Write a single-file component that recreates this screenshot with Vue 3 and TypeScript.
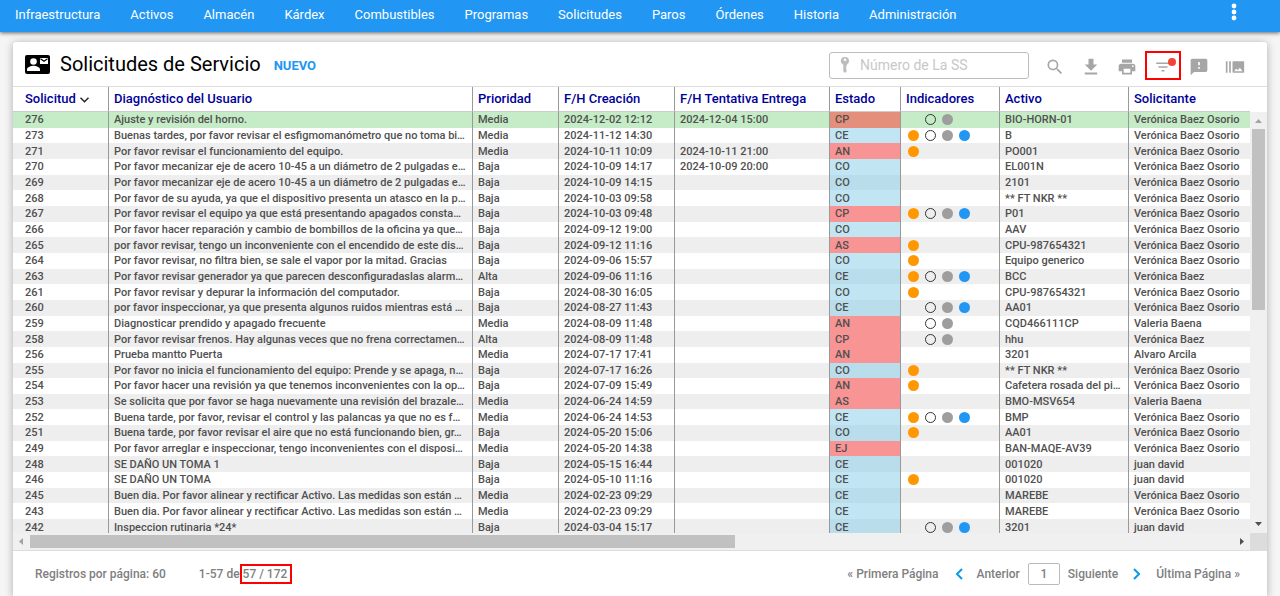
<script setup lang="ts">
import { ref } from 'vue'

type Row = { id: number; diag: string; prio: string; created: string; due: string; state: string; dots: string; asset: string; by: string }

const menu: string[] = ['Infraestructura', 'Activos', 'Almacén', 'Kárdex', 'Combustibles', 'Programas', 'Solicitudes', 'Paros', 'Órdenes', 'Historia', 'Administración']
const columns: string[] = ['Solicitud', 'Diagnóstico del Usuario', 'Prioridad', 'F/H Creación', 'F/H Tentativa Entrega', 'Estado', 'Indicadores', 'Activo', 'Solicitante']
const vbo = 'Verónica Baez Osorio'
const dotKinds: string[] = ['o', 'w', 'g', 'b']

const source: [number, string, string, string, string, string, string, string, string][] = [
  [276, 'Ajuste y revisión del horno.', 'Media', '2024-12-02 12:12', '2024-12-04 15:00', 'CP', 'wg', 'BIO-HORN-01', vbo],
  [273, 'Buenas tardes, por favor revisar el esfigmomanómetro que no toma bi…', 'Media', '2024-11-12 14:30', '', 'CE', 'owgb', 'B', vbo],
  [271, 'Por favor revisar el funcionamiento del equipo.', 'Media', '2024-10-11 10:09', '2024-10-11 21:00', 'AN', 'o', 'PO001', vbo],
  [270, 'Por favor mecanizar eje de acero 10-45 a un diámetro de 2 pulgadas e…', 'Baja', '2024-10-09 14:17', '2024-10-09 20:00', 'CO', '', 'EL001N', vbo],
  [269, 'Por favor mecanizar eje de acero 10-45 a un diámetro de 2 pulgadas e…', 'Baja', '2024-10-09 14:15', '', 'CO', '', '2101', vbo],
  [268, 'Por favor de su ayuda, ya que el dispositivo presenta un atasco en la p…', 'Baja', '2024-10-03 09:58', '', 'CO', '', '** FT NKR **', vbo],
  [267, 'Por favor revisar el equipo ya que está presentando apagados consta…', 'Baja', '2024-10-03 09:48', '', 'CP', 'owgb', 'P01', vbo],
  [266, 'Por favor hacer reparación y cambio de bombillos de la oficina ya que…', 'Baja', '2024-09-12 19:00', '', 'CO', '', 'AAV', vbo],
  [265, 'por favor revisar, tengo un inconveniente con el encendido de este dis…', 'Baja', '2024-09-12 11:16', '', 'AS', 'o', 'CPU-987654321', vbo],
  [264, 'Por favor revisar, no filtra bien, se sale el vapor por la mitad. Gracias', 'Baja', '2024-09-06 15:57', '', 'CO', 'o', 'Equipo generico', vbo],
  [263, 'Por favor revisar generador ya que parecen desconfiguradaslas alarm…', 'Alta', '2024-09-06 11:16', '', 'CE', 'owgb', 'BCC', 'Verónica Baez'],
  [261, 'Por favor revisar y depurar la información del computador.', 'Baja', '2024-08-30 16:05', '', 'CO', 'o', 'CPU-987654321', vbo],
  [260, 'por favor inspeccionar, ya que presenta algunos ruidos mientras está …', 'Baja', '2024-08-27 11:43', '', 'CE', 'wgb', 'AA01', vbo],
  [259, 'Diagnosticar prendido y apagado frecuente', 'Media', '2024-08-09 11:48', '', 'AN', 'wg', 'CQD466111CP', 'Valeria Baena'],
  [258, 'Por favor revisar frenos. Hay algunas veces que no frena correctamen…', 'Alta', '2024-08-09 11:48', '', 'CP', 'wg', 'hhu', 'Verónica Baez'],
  [256, 'Prueba mantto Puerta', 'Media', '2024-07-17 17:41', '', 'AN', '', '3201', 'Alvaro Arcila'],
  [255, 'Por favor no inicia el funcionamiento del equipo: Prende y se apaga, n…', 'Baja', '2024-07-17 16:26', '', 'CO', 'o', '** FT NKR **', vbo],
  [254, 'Por favor hacer una revisión ya que tenemos inconvenientes con la op…', 'Baja', '2024-07-09 15:49', '', 'AN', 'o', 'Cafetera rosada del pi…', vbo],
  [253, 'Se solicita que por favor se haga nuevamente una revisión del brazale…', 'Media', '2024-06-24 14:59', '', 'AS', '', 'BMO-MSV654', 'Valeria Baena'],
  [252, 'Buena tarde, por favor, revisar el control y las palancas ya que no es f…', 'Media', '2024-06-24 14:53', '', 'CE', 'owgb', 'BMP', vbo],
  [251, 'Buena tarde, por favor revisar el aire que no está funcionando bien, gr…', 'Baja', '2024-05-20 15:06', '', 'CO', 'o', 'AA01', vbo],
  [249, 'Por favor arreglar e inspeccionar, tengo inconvenientes con el disposi…', 'Media', '2024-05-20 14:38', '', 'EJ', '', 'BAN-MAQE-AV39', vbo],
  [248, 'SE DAÑO UN TOMA 1', 'Baja', '2024-05-15 16:44', '', 'CE', '', '001020', 'juan david'],
  [246, 'SE DAÑO UN TOMA', 'Baja', '2024-05-10 11:16', '', 'CE', 'o', '001020', 'juan david'],
  [245, 'Buen dia. Por favor alinear y rectificar Activo. Las medidas son están …', 'Media', '2024-02-23 09:29', '', 'CE', '', 'MAREBE', vbo],
  [243, 'Buen dia. Por favor alinear y rectificar Activo. Las medidas son están …', 'Media', '2024-02-23 09:29', '', 'CE', '', 'MAREBE', vbo],
  [242, 'Inspeccion rutinaria *24*', 'Baja', '2024-03-04 15:17', '', 'CE', 'wgb', '3201', 'juan david'],
]
const rows: Row[] = source.map(([id, diag, prio, created, due, state, dots, asset, by]) => ({ id, diag, prio, created, due, state, dots, asset, by }))

const selected = ref(276)
const query = ref('')
const page = ref('1')
const isBlue = (s: string): boolean => s === 'CE' || s === 'CO'
</script>

<template>
  <div class="app">
    <header class="topbar">
      <nav class="menu">
        <a v-for="m in menu" :key="m" href="#">{{ m }}</a>
      </nav>
      <button class="more" aria-label="Más opciones">
        <svg width="24" height="24" viewBox="0 0 24 24"><g fill="#fff"><circle cx="12" cy="3" r="2.4" /><circle cx="12" cy="9" r="2.4" /><circle cx="12" cy="15" r="2.4" /></g></svg>
      </button>
    </header>

    <main class="card">
      <div class="head">
        <svg class="logo" width="26" height="20" viewBox="0 0 26 20">
          <rect x="0" y="0" width="25" height="19" rx="2" fill="#000" />
          <circle cx="8.5" cy="6.5" r="3.3" fill="#fff" />
          <path d="M2 16v-1.6c0-2.3 4.3-3.6 6.5-3.6s6.5 1.3 6.5 3.6V16z" fill="#fff" />
          <path d="M15 3h8v6h-8z" fill="#fff" />
          <path d="M15.5 3.800l3.500 2.400 3.500-2.400" fill="none" stroke="#000" stroke-width="1.200" />
        </svg>
        <h1>Solicitudes de Servicio</h1>
        <button class="new">NUEVO</button>
        <label class="search">
          <svg width="10" height="16" viewBox="0 0 10 16"><path fill="#bdbdbd" fill-rule="evenodd" d="M5 0a4 4 0 0 1 4 4c0 1.700-1 3-2.300 3.700V9l-.9.900.9 1-.9 1 .9 1v1.200L5 16l-1.700-1.700V7.700A4 4 0 0 1 5 0zm0 1.400a1.300 1.300 0 1 0 0 2.600 1.300 1.300 0 0 0 0-2.600z" /></svg>
          <input v-model="query" type="text" placeholder="Número de La SS" aria-label="Número de La SS">
        </label>
        <div class="tools">
          <button aria-label="Buscar"><svg width="20" height="20" viewBox="0 0 24 24"><path d="M15.500 14h-.79l-.28-.27A6.500 6.500 0 1 0 13.730 14.430l.27.28v.79l5 4.990L20.490 19zm-6 0a4.500 4.500 0 1 1 0-9 4.500 4.500 0 0 1 0 9z" /></svg></button>
          <button aria-label="Descargar"><svg width="20" height="20" viewBox="0 0 24 24"><path d="M19.500 9H15V2H9v7H4.500l7.500 7.500zM4.500 18.500V21h15v-2.500z" /></svg></button>
          <button aria-label="Imprimir"><svg width="20" height="20" viewBox="0 0 24 24"><path d="M19 8H5a3 3 0 0 0-3 3v6h4v4h12v-4h4v-6a3 3 0 0 0-3-3zm-3 11H8v-5h8zm3-7a1 1 0 1 1 0-2 1 1 0 0 1 0 2zM18 3H6v4h12z" /></svg></button>
          <button class="marked" aria-label="Filtrar">
            <svg width="20" height="20" viewBox="0 0 24 24"><path d="M10 18h4v-2h-4zM3 6v2h18V6zm3 7h12v-2H6z" /></svg>
            <span class="alert"></span>
          </button>
          <button aria-label="Comentarios"><svg width="20" height="20" viewBox="0 0 24 24"><path fill-rule="evenodd" d="M20 2H4a2 2 0 0 0-2 2v18l4-4h14a2 2 0 0 0 2-2V4a2 2 0 0 0-2-2zm-7 12h-2v-2h2zm0-4h-2V6h2z" /></svg></button>
          <button aria-label="Galería"><svg width="20" height="20" viewBox="0 0 24 24"><path fill-rule="evenodd" d="M1 5h2v14H1zm4 0h2v14H5zm17 0H10a1 1 0 0 0-1 1v12a1 1 0 0 0 1 1h12a1 1 0 0 0 1-1V6a1 1 0 0 0-1-1zM11 17l2.500-3.150L15.290 16l2.500-3.220L21 17z" /></svg></button>
        </div>
      </div>

      <div class="grid">
        <div class="view">
          <table>
            <colgroup><col class="c0"><col><col class="c2"><col class="c3"><col class="c4"><col class="c5"><col class="c6"><col class="c7"><col class="c8"></colgroup>
            <thead>
              <tr>
                <th v-for="(c, i) in columns" :key="c" scope="col">{{ c }}<svg v-if="i === 0" class="sort" width="9" height="6" viewBox="0 0 9 6"><path d="M.5 .8L4.500 4.800 8.500 .8" fill="none" stroke="#222" stroke-width="1.400" /></svg></th>
              </tr>
            </thead>
            <tbody>
              <tr v-for="r in rows" :key="r.id" :class="{ sel: r.id === selected }" @click="selected = r.id">
                <td>{{ r.id }}</td>
                <td>{{ r.diag }}</td>
                <td>{{ r.prio }}</td>
                <td>{{ r.created }}</td>
                <td>{{ r.due }}</td>
                <td :class="isBlue(r.state) ? 'blue' : 'red'">{{ r.state }}</td>
                <td class="ind"><div v-if="r.dots" class="dots"><i v-for="k in dotKinds" :key="k" :class="r.dots.includes(k) ? k : ''"></i></div></td>
                <td>{{ r.asset }}</td>
                <td>{{ r.by }}</td>
              </tr>
            </tbody>
          </table>
        </div>
        <div class="vbar">
          <svg width="17" height="17" viewBox="0 0 17 17"><path d="M5 11l3.500-4 3.500 4z" fill="#a3a3a3" /></svg>
          <div class="vthumb"></div>
          <svg class="end" width="17" height="17" viewBox="0 0 17 17"><path d="M5 6l3.500 4L12 6z" fill="#505050" /></svg>
        </div>
        <div class="hbar">
          <svg width="17" height="17" viewBox="0 0 17 17"><path d="M10 5L6 8.500l4 3.500z" fill="#a3a3a3" /></svg>
          <div class="hthumb"></div>
          <svg class="end" width="17" height="17" viewBox="0 0 17 17"><path d="M7 5l4 3.500L7 12z" fill="#505050" /></svg>
        </div>
        <div class="corner"></div>
      </div>

      <footer class="foot">
        <span class="size">Registros por página: 60</span>
        <span>1-57 de</span><span class="total">57 / 172</span>
        <div class="pager">
          <a href="#">« Primera Página</a>
          <a class="step" href="#"><svg width="8" height="12" viewBox="0 0 8 12"><path d="M7 1L2 6l5 5" /></svg>Anterior</a>
          <input v-model="page" type="text" aria-label="Página">
          <a class="step" href="#">Siguiente<svg width="8" height="12" viewBox="0 0 8 12"><path d="M2 1l5 5-5 5" /></svg></a>
          <a href="#">Última Página »</a>
        </div>
      </footer>
    </main>
  </div>
</template>

<style>
body { background: #f5f5f5; overflow: hidden; }
</style>

<style scoped>
.app { min-height: 100vh; overflow: hidden; font-family: Roboto, "Liberation Sans", sans-serif; box-sizing: border-box; display: flex; flex-direction: column; }
.app * { box-sizing: border-box; }
button { border: 0; background: none; padding: 0; font-family: inherit; cursor: pointer; }
a { text-decoration: none; color: inherit; }
svg { flex: none; }

.topbar { display: flex; align-items: center; justify-content: space-between; height: 32px; padding: 0 34px 3px 15px; background: #2196f3; box-shadow: 0 1px 4px rgba(0, 0, 0, .6); }
.menu { display: flex; gap: 30px; font-size: 13px; line-height: 20px; font-weight: 400; color: #fff; }
.more { display: flex; }

.card { flex: 1; margin: 10px 13px 0; background: #fff; border-radius: 3px 3px 0 0; box-shadow: 0 1px 8px rgba(0, 0, 0, .3); }
.head { display: flex; align-items: center; height: 45px; padding: 0 14px 0 12px; border-bottom: 1px solid #ddd; }
.logo { margin: 2px 9px 0 0; }
h1 { margin: 0; font-size: 20px; line-height: 24px; font-weight: 400; color: #000; }
.new { margin: 3px 0 0 13px; font-size: 13px; line-height: 20px; font-weight: 700; color: #2196f3; }
.search { display: flex; align-items: center; gap: 10px; width: 200px; height: 27px; margin: 2px 0 0 auto; padding: 0 10px; border: 1px solid #bdbdbd; border-radius: 3px; }
.search input { width: 100%; min-width: 0; border: 0; outline: 0; padding: 0; background: none; font-family: inherit; font-size: 14px; line-height: 20px; color: #444; }
.search input::placeholder { color: #c8c8c8; opacity: 1; }
.tools { display: flex; margin: 3px 0 0 8px; }
.tools button { position: relative; display: flex; align-items: center; justify-content: center; width: 36px; height: 29px; padding-top: 2px; }
.tools svg { fill: #a6a6a6; }
.tools .marked { border: 2px solid #f00; }
.marked svg { width: 18px; height: 18px; }
.alert { position: absolute; top: 5px; right: 3px; width: 8px; height: 8px; border-radius: 50%; background: #f44336; }

.grid { display: grid; grid-template-columns: 1fr 17px; grid-template-rows: 446px 17px; border-bottom: 1px solid #ddd; }
.view { overflow: hidden; min-width: 0; }
table { width: 100%; height: 448px; border-collapse: separate; border-spacing: 0; table-layout: fixed; }
.c0 { width: 96px; }
.c2 { width: 86px; }
.c3 { width: 116px; }
.c4 { width: 155px; }
.c5 { width: 71px; }
.c6 { width: 99px; }
.c7 { width: 129px; }
.c8 { width: 121px; }
th, td { padding: 0 5px; text-align: left; white-space: nowrap; overflow: hidden; border-right: 1px solid #999; }
th:first-child, td:first-child { padding-left: 12px; }
th:last-child, td:last-child { border-right: 0; }
th { height: 25px; font-size: 13px; line-height: 20px; font-weight: 500; color: #000099; border-bottom: 1px solid #ccc; }
td { font-size: 11px; line-height: 15px; font-weight: 500; color: #505050; }
.sort { margin-left: 4px; }
tbody tr:nth-child(odd) { background: #eee; }
tbody tr.sel { background: #c5ecc6; }
.blue { background: #c2e5f4; }
tr:nth-child(odd) .blue { background: #b9ddeb; }
.red { background: #f89494; }
.sel .red { background: #e38f7b; }
.ind { padding: 0 7px; }
.dots { display: flex; align-items: center; gap: 6px; height: 15px; }
.dots i { width: 11px; height: 11px; border-radius: 50%; }
.dots .o { background: #ff9800; }
.dots .w { border: 1px solid #333; }
.dots .g { background: #9e9e9e; }
.dots .b { background: #2196f3; }

.vbar { display: flex; flex-direction: column; margin-top: 25px; background: #f0f0f0; }
.vthumb { height: 43%; margin: 0 2px; background: #c1c1c1; }
.hbar { display: flex; background: #f0f0f0; }
.hthumb { width: 57%; margin: 2px 0; background: #c1c1c1; }
.vbar .end { margin-top: auto; }
.hbar .end { margin-left: auto; }
.corner { background: #dcdcdc; }

.foot { display: flex; align-items: center; height: 46px; padding: 0 27px 0 22px; font-size: 12px; line-height: 16px; font-weight: 500; color: #808080; }
.size { margin-right: 33px; }
.total { padding: 0 3px 0 1px; border: 2px solid #f00; }
.pager { display: flex; align-items: center; margin-left: auto; gap: 16px; }
.step { display: flex; align-items: center; gap: 14px; }
.step path { fill: none; stroke: #0b9bea; stroke-width: 2; }
.pager input { width: 32px; height: 22px; margin: 0 -8px; border: 1px solid #bbb; border-radius: 2px; text-align: center; font-family: inherit; font-size: 12px; font-weight: 500; color: #808080; }
</style>
